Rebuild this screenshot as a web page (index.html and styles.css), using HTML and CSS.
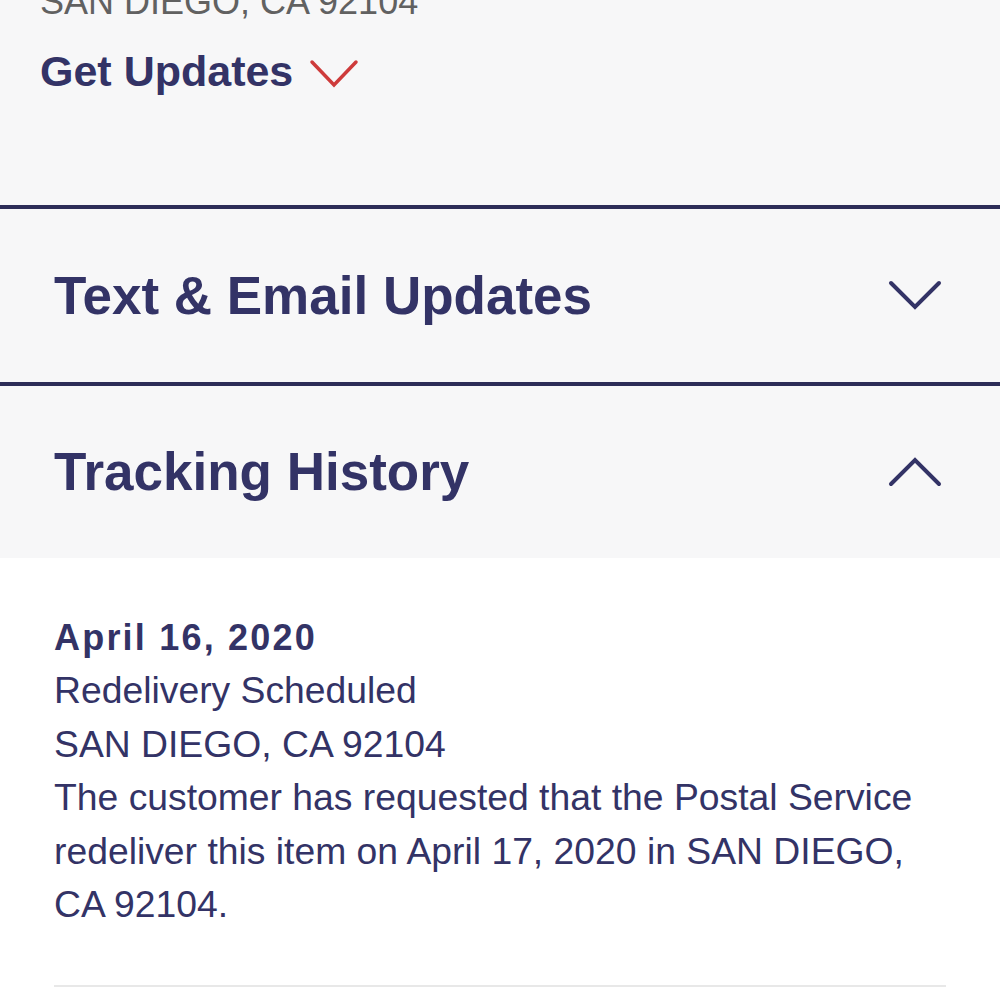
FILE: index.html
```html
<!DOCTYPE html>
<html lang="en-US">
  <head>
    <title>USPS Tracking</title>
    <meta charset="utf-8" />
    <meta name="viewport" content="width=device-width, initial-scale=1.0" />
    <link rel="stylesheet" href="styles.css">
  </head>
  <body>
    <main>
      <section class="summary">
        <p class="summaryAddress">SAN DIEGO, CA 92104</p>
        <button class="getUpdates" type="button">
          Get Updates
          <svg width="50" height="30" viewBox="0 0 50 30">
            <polyline points="3,3 25,26 47,3" />
          </svg>
        </button>
      </section>

      <section class="panel">
        <button class="panelHeader" type="button">
          <h2>Text &amp; Email Updates</h2>
          <svg class="chevron" width="56" height="34" viewBox="0 0 56 34">
            <polyline points="4,5 28,29 52,5" />
          </svg>
        </button>
      </section>

      <section class="panel open">
        <button class="panelHeader" type="button">
          <h2>Tracking History</h2>
          <svg class="chevron" width="56" height="34" viewBox="0 0 56 34">
            <polyline points="4,29 28,5 52,29" />
          </svg>
        </button>
        <div class="panelBody">
          <div class="event">
            <p class="eventDate">April 16, 2020</p>
            <p>Redelivery Scheduled</p>
            <p>SAN DIEGO, CA 92104</p>
            <p>The customer has requested that the Postal Service redeliver this item on April 17, 2020 in SAN DIEGO, CA 92104.</p>
          </div>
        </div>
      </section>
    </main>
  </body>
</html>
```

FILE: styles.css
```css
* {
  box-sizing: border-box;
  font-family: "Liberation Sans", Arial, sans-serif;
}
html {
  background-color: white;
}
body {
  margin: 0;
  overflow: hidden;
  color: hsl(240, 33%, 30%);
}
main {
  display: flex;
  flex-flow: column nowrap;
}
p {
  margin: 0;
}
button {
  border: none;
  background: none;
  padding: 0;
  color: inherit;
  cursor: pointer;
}
.summary {
  display: flex;
  flex-flow: column nowrap;
  align-items: flex-start;
  padding: 0 40px 109px;
  background-color: hsl(240, 10%, 97%);
}
.summaryAddress {
  margin-top: -25px;
  font-size: 36px;
  line-height: 53.5px;
  color: hsl(0, 0%, 38%);
}
.getUpdates {
  display: flex;
  align-items: center;
  gap: 16px;
  margin-top: 18px;
  font-size: 43px;
  font-weight: 700;
  line-height: 1.15;
}
.getUpdates svg {
  margin-top: 6px;
}
.getUpdates polyline {
  fill: none;
  stroke: hsl(0, 60%, 52%);
  stroke-width: 3.5;
  stroke-linecap: round;
  stroke-linejoin: miter;
}
.panel {
  border-top: 4px solid hsl(240, 32%, 26%);
  background-color: hsl(240, 10%, 97%);
}
.panelHeader {
  display: flex;
  align-items: center;
  justify-content: space-between;
  width: 100%;
  height: 173px;
  padding: 0 57px 0 54px;
  text-align: left;
}
.panel.open .panelHeader {
  height: 172px;
}
h2 {
  margin: 0;
  font-size: 53px;
  font-weight: 700;
}
.chevron polyline {
  fill: none;
  stroke: hsl(240, 33%, 30%);
  stroke-width: 4;
  stroke-linecap: round;
}
.panelBody {
  padding: 53px 54px 0;
  background-color: white;
}
.event {
  padding-bottom: 53px;
  border-bottom: 2px solid hsl(0, 0%, 91%);
  font-size: 37.3px;
  line-height: 53.5px;
}
.eventDate {
  font-size: 36px;
  font-weight: 700;
  letter-spacing: 2.2px;
}
```
